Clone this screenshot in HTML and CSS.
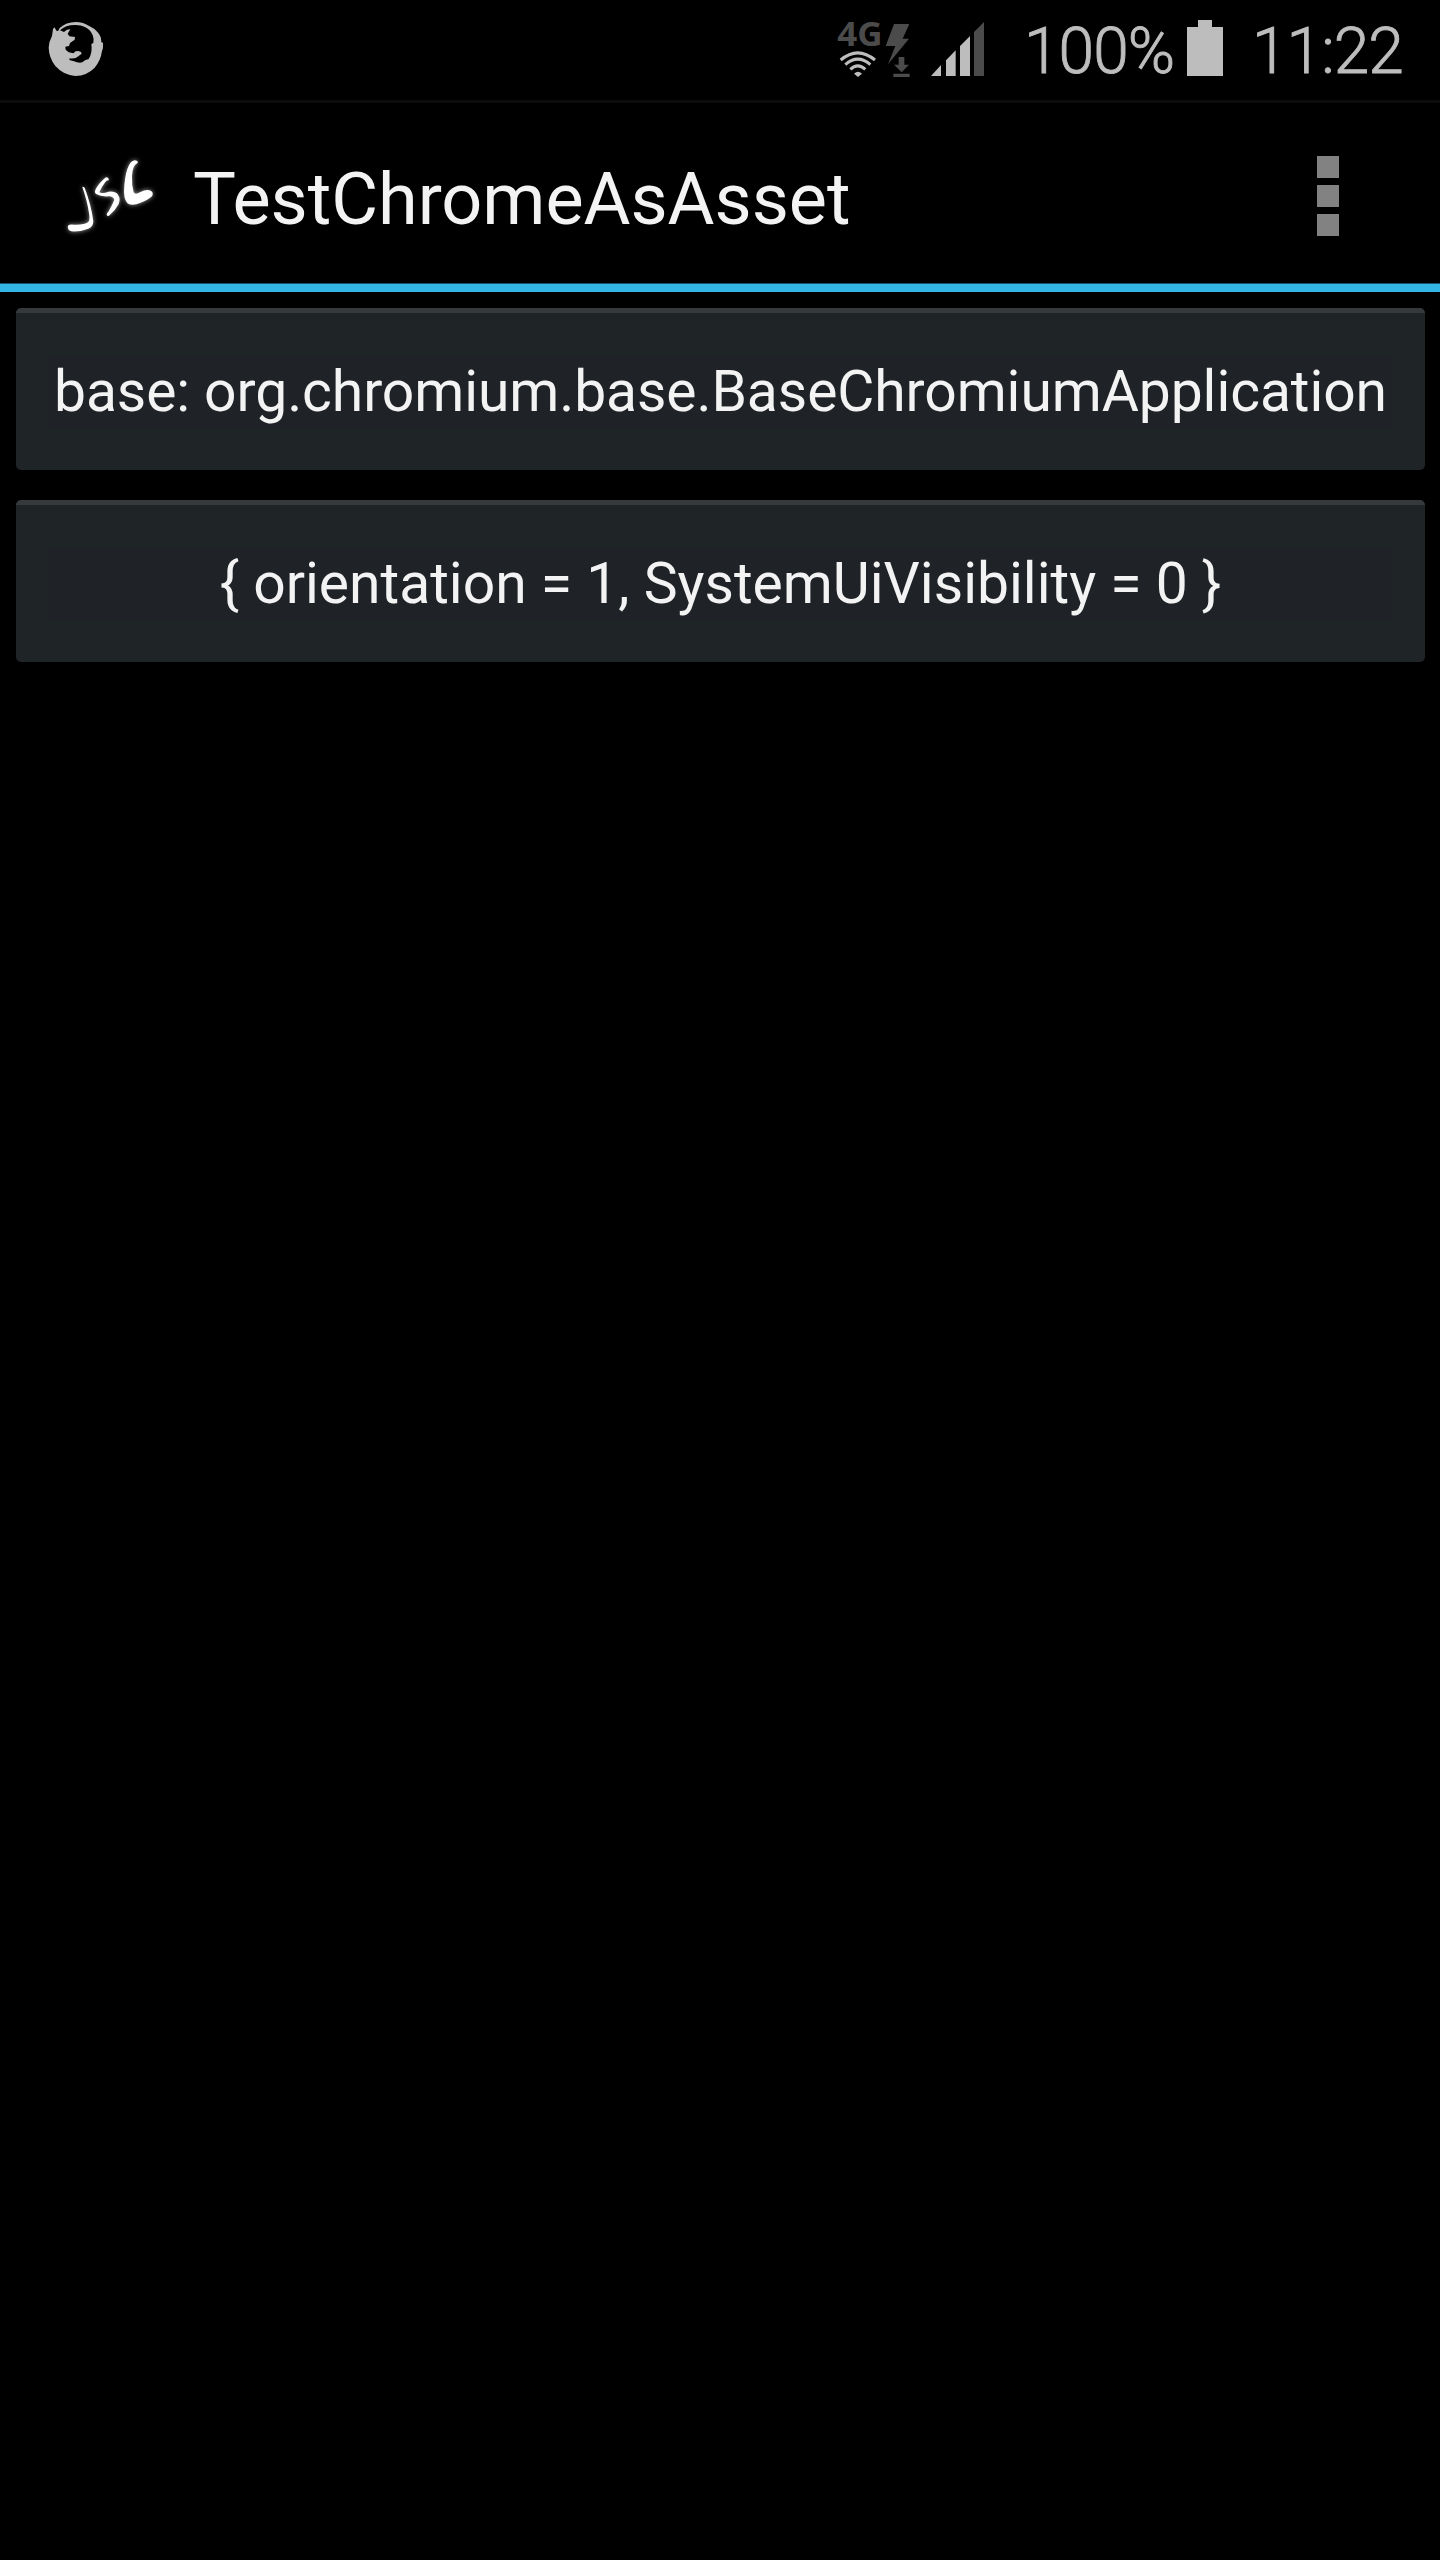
FILE: index.html
```html
<!DOCTYPE html>
<html lang="en">
<head>
<meta charset="utf-8">
<title>TestChromeAsAsset</title>
<link rel="stylesheet" href="styles.css">
</head>
<body>
<header class="status-bar">
  <svg class="firefox" width="60" height="60" viewBox="48 60 180 180" aria-hidden="true">
    <path fill="#bdbdbd" d="M73 82L69 87L66 108Q57 124 56 143Q57 173 76 198Q101 226 136 228Q171 227 194 203Q212 182 216 153Q220 145 219 128L214 127Q214 108 203 97Q193 85 179 79Q160 66 137 66Q108 66 89 84L85 92L80 93ZM90 91Q108 74 137 75Q153 75 165 81Q181 89 188 105Q193 119 190 129L184 132Q188 158 176 177L165 181L157 187Q146 190 132 184L118 180L119 175Q136 178 146 168L155 161L153 156L145 153L137 154L130 160L116 157L107 149L106 140L117 138L120 129L134 119L135 111L118 109L113 101L121 88L111 89L102 96Z"/>
  </svg>
  <svg class="network" width="80" height="80" viewBox="48 0 240 240" aria-hidden="true">
    <text class="network-type" x="52" y="138" textLength="136" lengthAdjust="spacingAndGlyphs">4G</text>
    <g fill="none" stroke="#bdbdbd" stroke-width="9">
      <path d="M62 180Q113 137 165 180M76 194Q113 161 151 194M91 208Q113 187 136 208"/>
    </g>
    <path fill="#bdbdbd" d="M102 221Q114 210 126 221L114 231Z"/>
    <path fill="#4b4b4b" d="M222 72H268L248 116H267L204 193L226 138H197ZM236 171H253V194H267L245 217L222 194H236ZM220 221H269V231H220Z"/>
  </svg>
  <svg class="signal" width="56" height="60" viewBox="330 60 168 180" aria-hidden="true">
    <path fill="#bdbdbd" d="M333 228L363 195V228ZM378 228V181L407 151V228ZM420 228V138L450 108V228Z"/>
    <path fill="#4b4b4b" d="M462 228V96L492 66V228Z"/>
  </svg>
  <span class="battery-level">100%</span>
  <svg class="battery" width="36" height="56" viewBox="0 0 36 56" aria-hidden="true">
    <path fill="#bdbdbd" d="M11 0H25V7H36V56H0V7H11Z"/>
  </svg>
  <span class="clock">11:22</span>
</header>
<div class="action-bar">
  <svg class="logo" width="112" height="104" viewBox="60 60 336 312" aria-hidden="true">
    <defs>
      <filter id="soft" x="-20%" y="-20%" width="140%" height="140%" color-interpolation-filters="sRGB"><feGaussianBlur stdDeviation="2"/></filter>
      <filter id="glow" x="-20%" y="-20%" width="140%" height="140%" color-interpolation-filters="sRGB"><feGaussianBlur stdDeviation="8"/></filter>
      <path id="letters" d="M127 171Q128 168 134 173Q154 225 160 274Q159 292 145 296Q120 306 94 304Q81 299 84 287Q89 282 102 284Q134 285 144 277Q151 271 147 250Q142 215 127 171ZM205 145L207 151Q201 149 196 156Q186 169 178 187Q187 192 206 185Q225 183 233 193Q243 207 236 222Q226 241 210 254Q204 261 200 255Q199 250 206 244Q217 224 223 209Q220 200 207 199Q183 201 170 193Q162 189 166 180Q174 162 195 144Q200 139 205 145ZM291 92Q296 95 292 100Q278 105 276 138Q275 165 281 187Q286 195 300 187Q319 177 332 182Q342 187 336 199Q324 210 302 218Q282 227 268 223Q253 217 252 186Q253 144 262 117Q271 92 284 91Z"/>
    </defs>
    <use href="#letters" fill="#a0a0a0" filter="url(#glow)"/>
    <use href="#letters" fill="#fff" filter="url(#soft)"/>
  </svg>
  <h1 class="title">TestChromeAsAsset</h1>
  <button class="overflow" aria-label="More options"><i></i><i></i><i></i></button>
</div>
<main class="content">
  <button class="action action-base"><span>base: org.chromium.base.BaseChromiumApplication</span></button>
  <button class="action"><span>{ orientation = 1, SystemUiVisibility = 0 }</span></button>
</main>
</body>
</html>
```
FILE: styles.css
```css
* { box-sizing: border-box; }
body {
  margin: 0;
  min-height: 2560px;
  background: #000;
  color: #f3f3f3;
  font-family: Roboto, sans-serif;
}
svg { display: block; flex: none; }
.status-bar {
  display: flex;
  align-items: flex-start;
  height: 103px;
  padding: 20px 30px 0 46px;
  border-bottom: 3px solid #0c0c0c;
  color: #bdbdbd;
  font-size: 64px;
  font-weight: 300;
  line-height: 64px;
  letter-spacing: -0.9px;
  -webkit-text-stroke: 0.9px #bdbdbd;
  white-space: nowrap;
}
.network { margin: -20px 0 0 730px; }
.network-type {
  font-family: "Open Sans", sans-serif;
  font-size: 101px;
  font-weight: 700;
  letter-spacing: 0;
  -webkit-text-stroke: 0;
  fill: #4b4b4b;
}
.signal { margin-left: 14px; }
.battery-level { width: 163px; margin-left: 38px; }
.battery-level, .clock { flex: none; }
.clock { margin-left: 29px; }
.action-bar {
  display: flex;
  align-items: center;
  height: 189px;
  padding: 12px 79px 0 60px;
  border-bottom: 8px solid #33b5e5;
  box-shadow: inset 0 -1px #17526a;
}
.logo { margin-top: 5px; }
.title {
  flex: 1;
  margin: 0 0 0 21px;
  font-size: 72px;
  font-weight: 400;
  line-height: 84px;
  letter-spacing: -0.04px;
  white-space: nowrap;
}
.overflow {
  display: flex;
  flex-direction: column;
  align-items: center;
  gap: 7px;
  width: 66px;
  margin-top: -7px;
  padding: 0;
  border: 0;
  background: none;
}
.overflow i { width: 22px; height: 22px; background: #828282; }
.content {
  display: flex;
  flex-direction: column;
  gap: 30px;
  padding: 16px 15px 0 16px;
}
.action {
  display: flex;
  align-items: center;
  height: 162px;
  padding: 0 32px;
  border: 0;
  border-top: 5px solid #36393c;
  border-radius: 5px;
  background: #1f2427;
  color: inherit;
  font: 400 57px/72px Roboto, sans-serif;
}
.action-base { letter-spacing: -0.08px; }
.action span {
  flex: 1;
  background: #1f2226;
  white-space: nowrap;
  text-align: center;
}
```
